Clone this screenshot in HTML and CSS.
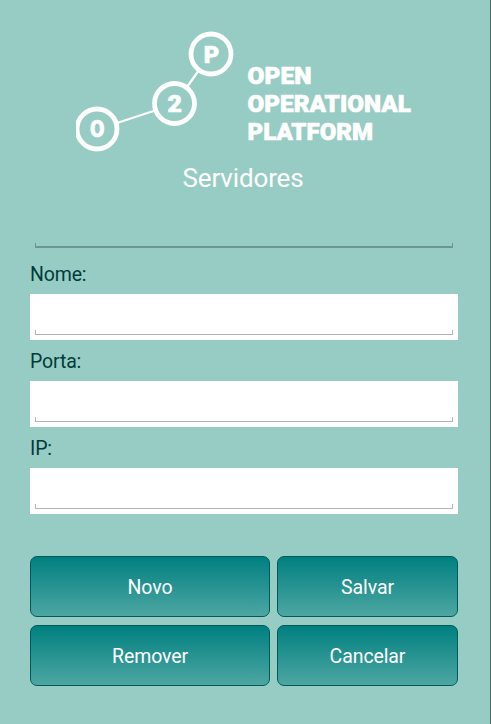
FILE: index.html
```html
<!DOCTYPE html>
<html lang="pt-BR">
<head>
  <meta charset="UTF-8">
  <meta name="viewport" content="width=device-width, initial-scale=1.0">
  <title>Servidores</title>
  <link rel="stylesheet" href="styles.css">
</head>
<body>
  <main class="screen">
    <svg class="logo" width="338" height="124" viewBox="0 0 338 124" role="img" aria-label="Open Operational Platform">
      <g class="logo-lines">
        <path d="M41 93L79 80.5" />
        <path d="M111 57L123 40" />
      </g>
      <g class="logo-nodes">
        <circle cx="21" cy="99" r="20" />
        <circle cx="98.5" cy="73.5" r="20" />
        <circle cx="135" cy="24" r="20" />
      </g>
      <g class="logo-letters">
        <text x="14" y="107.2" textLength="14.5" lengthAdjust="spacingAndGlyphs">O</text>
        <text x="91.5" y="81.5" textLength="14.5" lengthAdjust="spacingAndGlyphs">2</text>
        <text x="127.8" y="32.5" textLength="15.5" lengthAdjust="spacingAndGlyphs">P</text>
      </g>
      <g class="logo-name">
        <text x="171.5" y="53.7" textLength="64" lengthAdjust="spacingAndGlyphs">OPEN</text>
        <text x="171.5" y="81.8" textLength="163.5" lengthAdjust="spacingAndGlyphs">OPERATIONAL</text>
        <text x="171.5" y="109.8" textLength="125.5" lengthAdjust="spacingAndGlyphs">PLATFORM</text>
      </g>
    </svg>

    <h1>Servidores</h1>

    <form id="serverForm">
      <div class="server-select"><span class="underline"></span></div>

      <label for="nome">Nome:</label>
      <div class="field">
        <input type="text" id="nome">
        <span class="underline"></span>
      </div>

      <label for="porta">Porta:</label>
      <div class="field">
        <input type="text" id="porta">
        <span class="underline"></span>
      </div>

      <label for="ip">IP:</label>
      <div class="field">
        <input type="text" id="ip">
        <span class="underline"></span>
      </div>

      <div class="actions">
        <button type="button">Novo</button>
        <button type="button">Salvar</button>
        <button type="button">Remover</button>
        <button type="button">Cancelar</button>
      </div>
    </form>
  </main>
</body>
</html>
```

FILE: styles.css
```css
* {
  box-sizing: border-box;
}
body {
  margin: 0;
  font-family: Roboto, sans-serif;
  background-color: #97ccc4;
}
.screen {
  height: 724px;
  padding: 30px 32px 0 30px;
  border-right: 1px solid #5b6060;
  overflow: hidden;
}

/* Logo */
.logo {
  display: block;
  margin-left: 46px;
}
.logo-lines {
  stroke: #fff;
  stroke-width: 2.2;
}
.logo-nodes {
  fill: none;
  stroke: #fff;
  stroke-width: 4.8;
}
.logo-letters,
.logo-name {
  fill: #fff;
  stroke: #fff;
  stroke-width: 0.6;
  stroke-linejoin: round;
  font-weight: 900;
  font-size: 23.2px;
}

h1 {
  margin: 8px 0 0;
  padding-right: 2px;
  font-size: 26px;
  font-weight: 400;
  letter-spacing: -0.15px;
  line-height: 33px;
  text-align: center;
  color: #fff;
}

/* Form */
.server-select {
  display: flex;
  align-items: flex-end;
  height: 57.6px;
  padding: 0 5px 5px;
}
.underline {
  display: block;
  flex: none;
  width: 100%;
  height: 5px;
  border: 1px solid #b4b4b4;
  border-top: none;
}
.server-select .underline {
  border-color: #6c9692;
  border-bottom-width: 2px;
}
label {
  display: block;
  height: 41.5px;
  padding-top: 9px;
  font-size: 19.5px;
  letter-spacing: -0.15px;
  line-height: 26px;
  color: #003c3a;
}
.field {
  display: flex;
  flex-direction: column;
  height: 45.6px;
  padding: 0 5px 5px;
  background-color: #fff;
}
.field input {
  flex: 1;
  min-height: 0;
  width: 100%;
  padding: 0 6px;
  border: none;
  outline: none;
  background: none;
  font: inherit;
}
.actions {
  display: grid;
  grid-template-columns: 240px 181px;
  grid-auto-rows: 61px;
  gap: 8px 7px;
  margin-top: 42px;
}
.actions button {
  padding: 2px 0 0;
  border: 1px solid #005a58;
  border-radius: 7px;
  background: linear-gradient(#008080, #4da6a2);
  font-family: inherit;
  font-size: 19.5px;
  letter-spacing: -0.1px;
  color: #fff;
  cursor: pointer;
}
```
